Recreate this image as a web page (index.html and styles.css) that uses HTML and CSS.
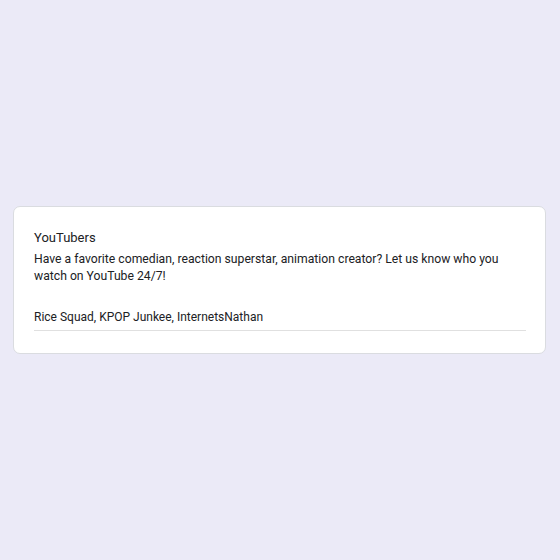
FILE: index.html
```html
<!DOCTYPE html>
<html>
<head>
<meta charset="utf-8">
<link rel="stylesheet" href="styles.css">
</head>
<body>
<div class="page">
  <div class="card">
    <div class="title">YouTubers</div>
    <div class="desc">Have a favorite comedian, reaction superstar, animation creator? Let us know who you watch on YouTube 24/7!</div>
    <div class="answer">Rice Squad, KPOP Junkee, InternetsNathan</div>
  </div>
</div>
</body>
</html>
```
FILE: styles.css
```css
html, body {
  margin: 0;
  padding: 0;
  background: #ebeaf7;
}
.page {
  width: 560px;
  height: 560px;
  box-sizing: border-box;
  padding: 206px 14px 0 13px;
  font-family: Roboto, "Liberation Sans", sans-serif;
}
.card {
  background: #fff;
  border: 1px solid #dadce0;
  border-radius: 7px;
  padding: 22px 19px 25px 20px;
  height: 148px;
  box-sizing: border-box;
}
.title {
  font-size: 13px;
  line-height: 17px;
  color: #202124;
}
.desc {
  margin-top: 5px;
  font-size: 12.2px;
  line-height: 17px;
  color: #202124;
  padding-right: 20px;
}
.answer {
  margin-top: 24px;
  font-size: 12px;
  line-height: 16px;
  color: #202124;
  padding-bottom: 5px;
  border-bottom: 1px solid #e0e0e0;
}
```
